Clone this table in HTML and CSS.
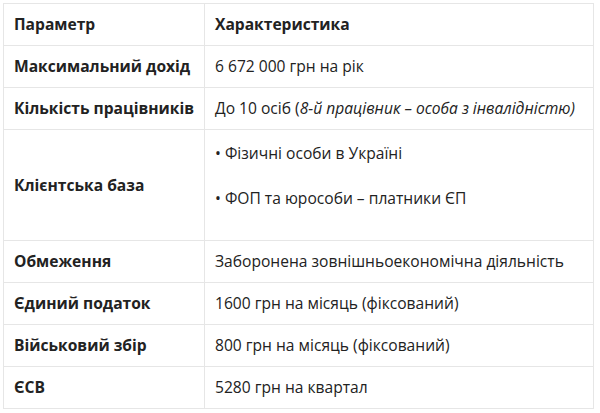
FILE: index.html
```html
<!DOCTYPE html>
<html lang="uk">
<head>
<meta charset="utf-8">
<link rel="stylesheet" href="styles.css">
</head>
<body>
<table class="tbl">
  <thead>
    <tr><th class="c1">Параметр</th><th class="c2">Характеристика</th></tr>
  </thead>
  <tbody>
    <tr><td class="lbl">Максимальний дохід</td><td>6 672 000 грн на рік</td></tr>
    <tr><td class="lbl">Кількість працівників</td><td>До 10 осіб (<em>8-й працівник – особа з інвалідністю)</em></td></tr>
    <tr><td class="lbl">Клієнтська база</td><td class="list"><p>• Фізичні особи в Україні</p><p>• ФОП та юрособи – платники ЄП</p></td></tr>
    <tr><td class="lbl">Обмеження</td><td>Заборонена зовнішньоекономічна діяльність</td></tr>
    <tr><td class="lbl">Єдиний податок</td><td>1600 грн на місяць (фіксований)</td></tr>
    <tr><td class="lbl">Військовий збір</td><td>800 грн на місяць (фіксований)</td></tr>
    <tr><td class="lbl">ЄСВ</td><td>5280 грн на квартал</td></tr>
  </tbody>
</table>
</body>
</html>
```
FILE: styles.css
```css
html, body { margin: 0; padding: 0; background: #fff; }
body { padding: 3px; font-family: "Open Sans", sans-serif; font-size: 15.6px; color: #222; }
.tbl { border-collapse: collapse; width: 591px; table-layout: fixed; }
.tbl th, .tbl td { border: 1px solid #e6e6e6; padding: 10px 9px 10px 10px; line-height: 21px; text-align: left; vertical-align: middle; white-space: nowrap; }
.tbl th { font-weight: 700; }
.tbl .c1 { width: 201px; box-sizing: border-box; }
.tbl .lbl { font-weight: 700; }
.tbl td.list { padding: 11px 9px 30px 10px; }
.list p { margin: 0 0 21px; line-height: 24px; }
.list p:last-child { margin-bottom: 0; }
em { font-style: italic; }
```
